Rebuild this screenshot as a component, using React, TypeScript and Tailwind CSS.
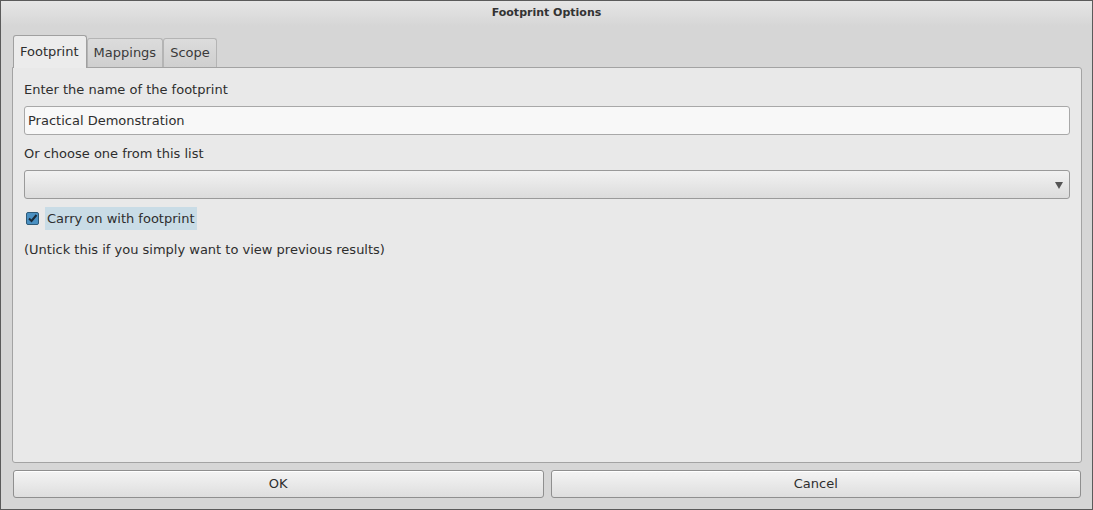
import { useState } from 'react';

const font = { fontFamily: '"DejaVu Sans", Verdana, sans-serif' };

function Tab({ label, active }: { label: string; active?: boolean }) {
  if (active) {
    return (
      <div className="relative z-10 -mb-px flex h-[33px] items-center rounded-t-[3px] border border-b-0 border-[#a0a0a0] bg-[#ececec] pl-[6px] pr-[7px] text-[13px] text-[#2e2e2e]">
        {label}
      </div>
    );
  }
  return (
    <div className="mt-[3px] flex h-[29px] items-center rounded-t-[3px] border border-b-0 border-[#b4b4b4] bg-gradient-to-b from-[#dcdcdc] to-[#cfcfcf] px-[6px] text-[13px] text-[#3a3a3a]">
      {label}
    </div>
  );
}

function Button({ label }: { label: string }) {
  return (
    <button className="flex h-[28px] flex-1 items-center justify-center rounded-[3px] border border-[#8f8f8f] bg-gradient-to-b from-[#f4f4f4] to-[#dedede] text-[13px] text-[#2e2e2e] shadow-[inset_0_1px_0_#ffffff]">
      {label}
    </button>
  );
}

export default function App() {
  const [carry, setCarry] = useState(true);
  const [name, setName] = useState('Practical Demonstration');

  return (
    <div
      style={font}
      className="flex h-[510px] w-[1093px] flex-col border border-[#5b5b5b] bg-[#d6d6d6] text-[#2e2e2e]"
    >
      <div className="flex h-[25px] shrink-0 items-center justify-center bg-gradient-to-b from-[#e6e6e6] to-[#d6d6d6] text-[11px] font-bold text-[#333333]">
        Footprint Options
      </div>

      <div className="flex flex-1 flex-col pl-[11px] pr-[10px] pt-[9px]">
        <div className="flex pl-px">
          <Tab label="Footprint" active />
          <Tab label="Mappings" />
          <Tab label="Scope" />
        </div>

        <div className="flex h-[396px] flex-col rounded-[3px] rounded-tl-none border border-[#a3a3a3] bg-[#e9e9e9] px-[11px] pt-[14px]">
          <div className="text-[13px] leading-[16px] text-[#2e2e2e]">Enter the name of the footprint</div>
          <input
            value={name}
            onChange={(e) => setName(e.target.value)}
            className="mt-[8px] h-[29px] w-full rounded-[3px] border border-[#a8a8a8] bg-[#f8f8f8] px-[3px] text-[13px] text-[#2e2e2e] outline-none"
          />
          <div className="mt-[11px] text-[13px] leading-[16px]">Or choose one from this list</div>
          <div className="mt-[8px] flex h-[29px] w-full items-center justify-end rounded-[3px] border border-[#9a9a9a] bg-gradient-to-b from-[#f2f2f2] to-[#dcdcdc] pr-[6px]">
            <svg width="8" height="8" viewBox="0 0 8 8">
              <path d="M0 1 L8 1 L4 8 Z" fill="#555555" />
            </svg>
          </div>
          <label className="mt-[8px] flex h-[23px] items-center" onClick={() => setCarry(!carry)}>
            <span className="ml-[2px] flex h-[13px] w-[13px] items-center justify-center rounded-[2px] border border-[#2d5a78] bg-[#4a90c2]">
              {carry && (
                <svg width="11" height="11" viewBox="0 0 11 11">
                  <path d="M2 5.5 L4.5 8 L9.5 2" stroke="#1a2a38" strokeWidth="2" fill="none" />
                </svg>
              )}
            </span>
            <span className="ml-[6px] flex h-[23px] items-center bg-[#c9dce6] px-[2px] text-[13px] text-[#2e2e2e]">
              Carry on with footprint
            </span>
          </label>
          <div className="mt-[12px] text-[13px] leading-[16px]">(Untick this if you simply want to view previous results)</div>
        </div>

        <div className="mt-[7px] flex gap-[7px] pl-px pr-px">
          <Button label="OK" />
          <Button label="Cancel" />
        </div>
      </div>
    </div>
  );
}
